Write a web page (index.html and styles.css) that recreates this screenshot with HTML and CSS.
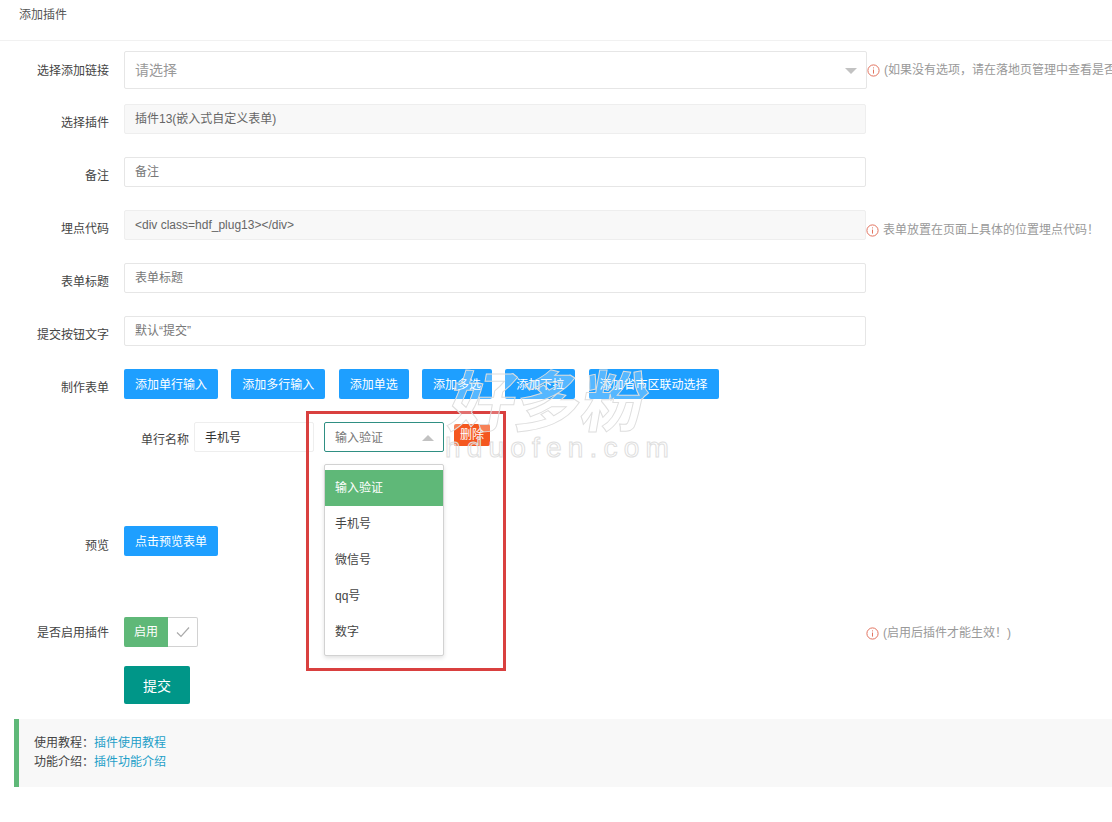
FILE: index.html
```html
<!DOCTYPE html>
<html lang="zh-CN">
<head>
<meta charset="utf-8">
<title>添加插件</title>
<link rel="stylesheet" href="styles.css">
</head>
<body>
<header class="page-title">添加插件</header>
<form class="form">
  <div class="row row-select">
    <label class="label label-plain">选择添加链接</label>
    <div class="control select-large"><span>请选择</span><i class="arrow"></i></div>
    <div class="hint"><svg class="info" viewBox="0 0 13 13"><circle cx="6.5" cy="6.5" r="5.6"/><path d="M6.5 3.4v1M6.5 5.6v4"/></svg>(如果没有选项，请在落地页管理中查看是否</div>
  </div>
  <div class="row">
    <label class="label">选择插件</label>
    <div class="control disabled">插件13(嵌入式自定义表单)</div>
  </div>
  <div class="row">
    <label class="label">备注</label>
    <div class="control placeholder">备注</div>
  </div>
  <div class="row">
    <label class="label">埋点代码</label>
    <div class="control disabled">&lt;div class=hdf_plug13&gt;&lt;/div&gt;</div>
    <div class="hint hint-low"><svg class="info" viewBox="0 0 13 13"><circle cx="6.5" cy="6.5" r="5.6"/><path d="M6.5 3.4v1M6.5 5.6v4"/></svg>表单放置在页面上具体的位置埋点代码！</div>
  </div>
  <div class="row">
    <label class="label">表单标题</label>
    <div class="control placeholder">表单标题</div>
  </div>
  <div class="row">
    <label class="label">提交按钮文字</label>
    <div class="control placeholder">默认“提交”</div>
  </div>
  <div class="row">
    <label class="label">制作表单</label>
    <div class="buttons">
      <button type="button" class="btn">添加单行输入</button>
      <button type="button" class="btn">添加多行输入</button>
      <button type="button" class="btn">添加单选</button>
      <button type="button" class="btn">添加多选</button>
      <button type="button" class="btn">添加下拉</button>
      <button type="button" class="btn">添加省市区联动选择</button>
    </div>
  </div>
  <div class="field-row">
    <span class="field-label">单行名称</span>
    <div class="field-input">手机号</div>
    <div class="field-select"><span>输入验证</span><i class="arrow arrow-up"></i></div>
    <button type="button" class="btn-del">删除</button>
  </div>
  <div class="row row-preview">
    <label class="label label-preview">预览</label>
    <button type="button" class="btn">点击预览表单</button>
  </div>
  <div class="row row-switch">
    <label class="label label-plain">是否启用插件</label>
    <div class="switch">
      <span class="switch-on">启用</span>
      <span class="switch-check"><svg viewBox="0 0 14 12"><path d="M1 6.5l4 4 8-9"/></svg></span>
    </div>
    <div class="hint hint-far"><svg class="info" viewBox="0 0 13 13"><circle cx="6.5" cy="6.5" r="5.6"/><path d="M6.5 3.4v1M6.5 5.6v4"/></svg>(启用后插件才能生效！)</div>
  </div>
  <div class="row row-submit">
    <button type="button" class="btn-submit">提交</button>
  </div>
</form>
<div class="notice">
  <p>使用教程：<a href="#">插件使用教程</a></p>
  <p>功能介绍：<a href="#">插件功能介绍</a></p>
</div>
<ul class="dropdown">
  <li class="active">输入验证</li>
  <li>手机号</li>
  <li>微信号</li>
  <li>qq号</li>
  <li>数字</li>
</ul>
<div class="red-box"></div>
<div class="watermark"><div class="wm-cn">好多粉</div><div class="wm-en">hduofen.com</div></div>
</body>
</html>
```
FILE: styles.css
```css
* { box-sizing: border-box; }
html, body { margin: 0; padding: 0; }
body {
  position: relative;
  width: 1112px;
  height: 822px;
  overflow: hidden;
  background: #fff;
  color: #444;
  font: 12px/20px "Liberation Sans", "Noto Sans CJK SC", sans-serif;
}
.page-title {
  height: 41px;
  padding: 5px 19px 0;
  border-bottom: 1px solid #f1f1f1;
  color: #555;
}
.form { padding-top: 10px; }
.row {
  display: flex;
  align-items: center;
  margin-bottom: 23px;
}
.row-select { margin-bottom: 15px; }
.label {
  flex: 0 0 109px;
  padding-top: 8px;
  text-align: right;
  color: #444;
}
.label-plain { padding-top: 2px; }
.label-preview { padding-top: 10px; }
.control {
  flex: 0 0 742px;
  height: 30px;
  margin-left: 15px;
  padding: 0 10px;
  border: 1px solid #e6e6e6;
  border-radius: 2px;
  line-height: 29px;
  color: #777;
  background: #fff;
}
.disabled { background: #f8f8f8; border-color: #eee; color: #666; }
.placeholder { color: #777; }
.select-large {
  position: relative;
  flex-basis: 743px;
  height: 38px;
  font-size: 14px;
  line-height: 36px;
  color: #999;
}
.arrow {
  position: absolute;
  right: 9px;
  top: 16px;
  width: 0;
  height: 0;
  border: 6px solid transparent;
  border-top: 6px solid #c2c2c2;
  border-bottom: 0;
}
.arrow-up {
  top: 12px;
  border-top: 0;
  border-bottom: 6px solid #c2c2c2;
}
.hint {
  display: flex;
  align-items: center;
  flex: none;
  white-space: nowrap;
  color: #999;
}
.hint-low { margin-top: 10px; }
.hint-far { margin-left: 668px; padding-top: 2px; }
.info {
  width: 13px;
  height: 13px;
  margin-right: 4px;
  fill: none;
  stroke: #e2735f;
  stroke-width: 1;
}
.buttons { display: flex; gap: 13.3px; margin-left: 15px; }
.btn {
  height: 30px;
  padding: 2px 11px 0;
  border: 0;
  border-radius: 2px;
  background: #1e9fff;
  color: #fff;
  font: inherit;
}
.row-preview { margin-bottom: 61px; }
.row-preview .btn { margin-left: 15px; }
.field-row {
  display: flex;
  align-items: center;
  height: 30px;
  margin-bottom: 74px;
  padding-left: 141px;
}
.field-label { width: 53px; padding-top: 5px; color: #444; }
.field-input {
  width: 120px;
  height: 30px;
  padding: 1px 10px 0;
  border: 1px solid #eee;
  border-radius: 2px;
  line-height: 29px;
  color: #333;
}
.field-select {
  position: relative;
  width: 120px;
  height: 30px;
  margin-left: 10px;
  padding: 1px 10px 0;
  border: 1px solid #2f8f83;
  border-radius: 2px;
  line-height: 29px;
  color: #777;
}
.btn-del {
  height: 22px;
  margin: 0 0 4px 10px;
  padding: 0 6px;
  border: 0;
  border-radius: 2px;
  background: #f4571f;
  color: #fff;
  font: inherit;
}
.row-switch { margin-bottom: 19px; }
.switch {
  display: flex;
  width: 74px;
  height: 30px;
  margin-left: 15px;
  border: 1px solid #d2d2d2;
  border-left: 0;
  border-radius: 2px;
}
.switch-on {
  width: 44px;
  height: 30px;
  margin-top: -1px;
  border-radius: 2px 0 0 2px;
  background: #5fb878;
  color: #fff;
  line-height: 31px;
  text-align: center;
}
.switch-check {
  display: flex;
  flex: 1;
  align-items: center;
  justify-content: center;
}
.switch-check svg {
  width: 14px;
  height: 12px;
  fill: none;
  stroke: #aaa;
  stroke-width: 1.2;
}
.row-submit { margin-bottom: 15px; padding-left: 124px; }
.btn-submit {
  width: 66px;
  height: 38px;
  border: 0;
  border-radius: 2px;
  background: #009688;
  color: #fff;
  font: 14px "Liberation Sans", "Noto Sans CJK SC", sans-serif;
}
.notice {
  height: 68px;
  margin-left: 14px;
  padding: 15px 15px 0;
  border-left: 5px solid #5fb878;
  background: #f8f8f8;
  line-height: 19px;
  color: #444;
}
.notice p { margin: 0; }
.notice a { color: #1e9fc8; text-decoration: none; }
.dropdown {
  position: absolute;
  left: 324px;
  top: 464px;
  width: 120px;
  height: 192px;
  margin: 0;
  padding: 5px 0 0;
  border: 1px solid #d2d2d2;
  border-radius: 2px;
  background: #fff;
  box-shadow: 0 2px 4px rgba(0, 0, 0, .12);
  list-style: none;
  color: #444;
}
.dropdown li { height: 36px; padding: 0 10px; line-height: 36px; }
.dropdown .active { background: #5fb878; color: #fff; }
.red-box {
  position: absolute;
  left: 306px;
  top: 411px;
  width: 200px;
  height: 260px;
  border: 3px solid #d9403f;
}
.watermark {
  position: absolute;
  left: 445px;
  top: 360px;
  width: 240px;
  color: rgba(255, 255, 255, .25);
  -webkit-text-stroke: 1px #dedede;
  pointer-events: none;
}
.wm-cn {
  margin-left: 6px;
  font: 700 66px/74px "Noto Sans CJK SC", sans-serif;
  transform: skewX(-10deg);
}
.wm-en {
  margin-top: 0;
  font: 28px/28px "Liberation Sans", sans-serif;
  letter-spacing: 6.2px;
  white-space: nowrap;
}
```
